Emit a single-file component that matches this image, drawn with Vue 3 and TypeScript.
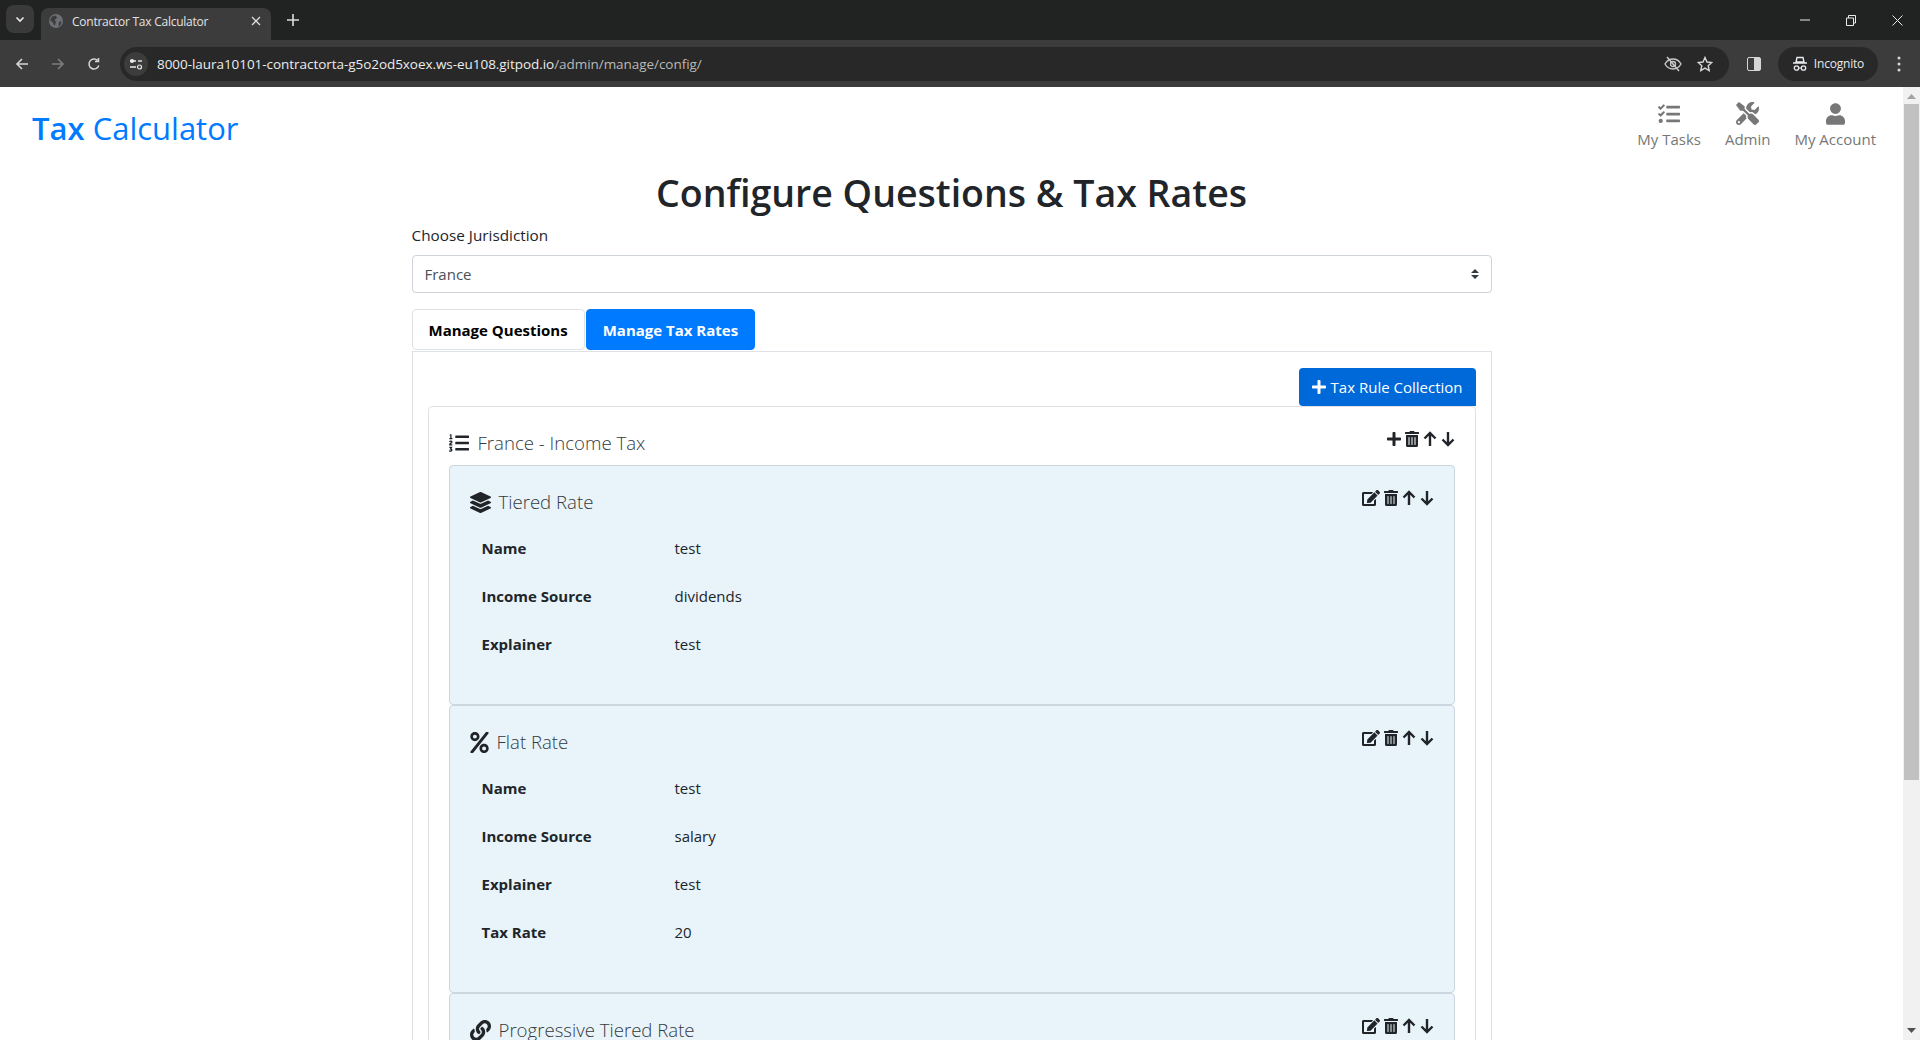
<script setup lang="ts">
const icons: Record<string, { box: string; d: string }> = {
  plus: { box: "0 0 448 512", d: "M416 208H272V64c0-17.67-14.33-32-32-32h-32c-17.67 0-32 14.33-32 32v144H32c-17.67 0-32 14.33-32 32v32c0 17.67 14.33 32 32 32h144v144c0 17.67 14.33 32 32 32h32c17.67 0 32-14.33 32-32V304h144c17.67 0 32-14.33 32-32v-32c0-17.67-14.33-32-32-32z" },
  trash: { box: "0 0 448 512", d: "M32 464a48 48 0 0 0 48 48h288a48 48 0 0 0 48-48V128H32zm272-256a16 16 0 0 1 32 0v224a16 16 0 0 1-32 0zm-96 0a16 16 0 0 1 32 0v224a16 16 0 0 1-32 0zm-96 0a16 16 0 0 1 32 0v224a16 16 0 0 1-32 0zM432 32H312l-9.4-18.7A24 24 0 0 0 281.1 0H166.8a23.72 23.72 0 0 0-21.4 13.3L136 32H16A16 16 0 0 0 0 48v32a16 16 0 0 0 16 16h416a16 16 0 0 0 16-16V48a16 16 0 0 0-16-16z" },
  edit: { box: "0 0 576 512", d: "M402.6 83.2l90.2 90.2c3.8 3.8 3.8 10 0 13.8L274.4 405.6l-92.8 10.3c-12.4 1.4-22.9-9.1-21.5-21.5l10.3-92.8L388.8 83.2c3.8-3.8 10-3.8 13.8 0zm162-22.9l-48.8-48.8c-15.2-15.2-39.9-15.2-55.2 0l-35.4 35.4c-3.8 3.8-3.8 10 0 13.8l90.2 90.2c3.8 3.8 10 3.8 13.8 0l35.4-35.4c15.2-15.3 15.2-40 0-55.2zM384 346.2V448H64V128h229.8c3.2 0 6.2-1.3 8.5-3.5l40-40c7.6-7.6 2.2-20.5-8.5-20.5H48C21.5 64 0 85.5 0 112v352c0 26.5 21.5 48 48 48h352c26.5 0 48-21.5 48-48V306.2c0-10.7-12.9-16-20.5-8.5l-40 40c-2.2 2.3-3.5 5.3-3.5 8.5z" },
  layers: { box: "0 0 512 512", d: "M12.41 148.02l232.94 105.67c6.8 3.09 14.49 3.09 21.29 0l232.94-105.67c16.55-7.51 16.55-32.52 0-40.03L266.65 2.31a25.607 25.607 0 0 0-21.29 0L12.41 107.98c-16.55 7.51-16.55 32.53 0 40.04zm487.18 88.28l-58.09-26.33-161.64 73.27c-7.56 3.43-15.59 5.17-23.86 5.17s-16.29-1.74-23.86-5.17L70.51 209.97l-58.1 26.33c-16.55 7.5-16.55 32.5 0 40l232.94 105.59c6.8 3.08 14.49 3.08 21.29 0L499.59 276.3c16.55-7.5 16.55-32.5 0-40zm0 127.8l-57.87-26.23-161.86 73.37c-7.56 3.43-15.59 5.17-23.86 5.17s-16.29-1.74-23.86-5.17L70.29 337.87 12.41 364.1c-16.55 7.5-16.55 32.5 0 40l232.94 105.59c6.8 3.08 14.49 3.08 21.29 0L499.59 404.1c16.55-7.5 16.55-32.5 0-40z" },
  listOl: { box: "0 0 512 512", d: "M61.77 401l17.5-20.15a19.92 19.92 0 0 0 5.07-14.19v-3.31C84.34 356 80.5 352 73 352H16a8 8 0 0 0-8 8v16a8 8 0 0 0 8 8h22.83a157.41 157.41 0 0 0-11 12.31l-5.61 7c-4 5.07-5.25 10.13-2.8 14.88l1.05 1.93c3 5.76 6.29 7.88 12.25 7.88h4.73c10.33 0 15.94 2.44 15.94 9.09 0 4.72-4.2 8.22-14.36 8.22a41.54 41.54 0 0 1-15.47-3.12c-6.49-3.88-11.74-3.5-15.6 3.12l-5.59 9.31c-3.72 6.13-3.19 11.72 2.63 15.94 7.71 4.69 20.38 9.44 37 9.44 34.16 0 48.5-22.75 48.5-44.12-.03-14.38-9.12-29.76-28.73-34.88zM496 224H176a16 16 0 0 0-16 16v32a16 16 0 0 0 16 16h320a16 16 0 0 0 16-16v-32a16 16 0 0 0-16-16zm0-160H176a16 16 0 0 0-16 16v32a16 16 0 0 0 16 16h320a16 16 0 0 0 16-16V80a16 16 0 0 0-16-16zm0 320H176a16 16 0 0 0-16 16v32a16 16 0 0 0 16 16h320a16 16 0 0 0 16-16v-32a16 16 0 0 0-16-16zM16 160h64a8 8 0 0 0 8-8v-16a8 8 0 0 0-8-8H64V40a8 8 0 0 0-8-8H32a8 8 0 0 0-7.14 4.42l-8 16A8 8 0 0 0 24 64h8v64H16a8 8 0 0 0-8 8v16a8 8 0 0 0 8 8zm-3.91 160H80a8 8 0 0 0 8-8v-16a8 8 0 0 0-8-8H41.32c3.29-10.29 48.34-18.68 48.34-56.44 0-29.06-25-39.56-44.47-39.56-21.36 0-33.8 10-40.46 18.75-4.37 5.59-3 10.84 2.8 15.37l8.58 6.88c5.61 4.56 11 2.47 16.12-2.44a13.44 13.44 0 0 1 9.46-3.84c3.33 0 9.28 1.56 9.28 8.75C51 248.19 0 257.31 0 304.59v4C0 316 5.08 320 12.09 320z" },
  link: { box: "0 0 512 512", d: "M326.612 185.391c59.747 59.809 58.927 155.698.36 214.59-.11.12-.24.25-.36.37l-67.2 67.2c-59.27 59.27-155.699 59.262-214.96 0-59.27-59.26-59.27-155.7 0-214.96l37.106-37.106c9.84-9.84 26.786-3.3 27.294 10.606.648 17.722 3.826 35.527 9.69 52.721 1.986 5.822.567 12.262-3.783 16.612l-13.087 13.087c-28.026 28.026-28.905 73.66-1.155 101.96 28.024 28.579 74.086 28.749 102.325.51l67.2-67.19c28.191-28.191 28.073-73.757 0-101.83-3.701-3.694-7.429-6.564-10.341-8.569a16.037 16.037 0 0 1-6.947-12.606c-.396-10.567 3.348-21.456 11.698-29.806l21.054-21.055c5.521-5.521 14.182-6.199 20.584-1.731a152.482 152.482 0 0 1 20.522 17.197zM467.547 44.449c-59.261-59.262-155.69-59.27-214.96 0l-67.2 67.2c-.12.12-.25.25-.36.37-58.566 58.892-59.387 154.781.36 214.59a152.454 152.454 0 0 0 20.521 17.196c6.402 4.468 15.064 3.789 20.584-1.731l21.054-21.055c8.35-8.35 12.094-19.239 11.698-29.806a16.037 16.037 0 0 0-6.947-12.606c-2.912-2.005-6.64-4.875-10.341-8.569-28.073-28.073-28.191-73.639 0-101.83l67.2-67.19c28.239-28.239 74.3-28.069 102.325.51 27.75 28.3 26.872 73.934-1.155 101.96l-13.087 13.087c-4.35 4.35-5.769 10.79-3.783 16.612 5.864 17.194 9.042 34.999 9.69 52.721.509 13.906 17.454 20.446 27.294 10.606l37.106-37.106c59.271-59.259 59.271-155.699.001-214.959z" },
  percent: { box: "0 0 448 512", d: "M112 224c61.9 0 112-50.1 112-112S173.9 0 112 0 0 50.1 0 112s50.1 112 112 112zm0-160c26.5 0 48 21.5 48 48s-21.5 48-48 48-48-21.5-48-48 21.5-48 48-48zm224 224c-61.9 0-112 50.1-112 112s50.1 112 112 112 112-50.1 112-112-50.1-112-112-112zm0 160c-26.5 0-48-21.5-48-48s21.5-48 48-48 48 21.5 48 48-21.5 48-48 48zM392.3.2l31.6.1c19.4.1 30.9 21.8 19.7 37.8L77.4 501.6a23.95 23.95 0 0 1-19.6 10.2l-33.4-.1c-19.5 0-30.9-21.9-19.7-37.8l368-463.7C377.2 4 384.5.2 392.3.2z" },
  user: { box: "0 0 448 512", d: "M224 256c70.7 0 128-57.3 128-128S294.7 0 224 0 96 57.3 96 128s57.3 128 128 128zm89.6 32h-16.7c-22.2 10.2-46.9 16-72.9 16s-50.6-5.8-72.9-16h-16.7C60.2 288 0 348.2 0 422.4V464c0 26.5 21.5 48 48 48h352c26.5 0 48-21.5 48-48v-41.6c0-74.2-60.2-134.4-134.4-134.4z" },
  tasks: { box: "0 0 512 512", d: "M139.61 35.5a12 12 0 0 0-17 0L58.93 98.81l-22.7-22.12a12 12 0 0 0-17 0L3.53 92.41a12 12 0 0 0 0 17l47.59 47.4a12.78 12.78 0 0 0 17.61 0l15.59-15.62L156.52 69a12.09 12.09 0 0 0 .09-17zm0 159.19a12 12 0 0 0-17 0l-63.68 63.72-22.7-22.1a12 12 0 0 0-17 0L3.53 252a12 12 0 0 0 0 17L51 316.5a12.77 12.77 0 0 0 17.6 0l15.7-15.69 72.2-72.22a12 12 0 0 0 .09-16.9zM64 368c-26.49 0-48.59 21.5-48.59 48S37.53 464 64 464a48 48 0 0 0 0-96zm432 16H208a16 16 0 0 0-16 16v32a16 16 0 0 0 16 16h288a16 16 0 0 0 16-16v-32a16 16 0 0 0-16-16zm0-320H208a16 16 0 0 0-16 16v32a16 16 0 0 0 16 16h288a16 16 0 0 0 16-16V80a16 16 0 0 0-16-16zm0 160H208a16 16 0 0 0-16 16v32a16 16 0 0 0 16 16h288a16 16 0 0 0 16-16v-32a16 16 0 0 0-16-16z" },
  tools: { box: "0 0 512 512", d: "M501.1 395.7L384 278.6c-23.1-23.1-57.6-27.6-85.4-13.9L192 158.1V96L64 0 0 64l96 128h62.1l106.6 106.6c-13.6 27.8-9.2 62.3 13.9 85.4l117.1 117.1c14.6 14.6 38.2 14.6 52.7 0l52.7-52.7c14.5-14.6 14.5-38.2 0-52.7zM331.7 225c28.3 0 54.9 11 74.9 31l19.4 19.4c15.8-6.9 30.8-16.5 43.8-29.5 37.1-37.1 49.7-89.3 37.9-136.7-2.2-9-13.5-12.1-20.1-5.5l-74.4 74.4-67.9-11.3L334 98.9l74.4-74.4c6.6-6.6 3.4-17.9-5.7-20.2-47.4-11.7-99.6.9-136.6 37.9-28.5 28.5-41.9 66.1-41.2 103.6l82.1 82.1c8.1-1.9 16.5-2.9 24.7-2.9zm-103.9 82l-56.7-56.7L18.7 402.8c-25 25-25 65.5 0 90.5s65.5 25 90.5 0l123.6-123.6c-7.6-19.9-9.9-41.6-5-62.7zM64 472c-13.2 0-24-10.8-24-24 0-13.3 10.7-24 24-24s24 10.7 24 24c0 13.2-10.7 24-24 24z" },
};

type Rule = {
  title: string;
  icon: string;
  iconWidth: number;
  rows: [string, string][];
};

const navItems = [
  { label: "My Tasks", icon: "tasks", width: 22, height: 22 },
  { label: "Admin", icon: "tools", width: 23, height: 23 },
  { label: "My Account", icon: "user", width: 19, height: 22 },
];

const rules: Rule[] = [
  {
    title: "Tiered Rate",
    icon: "layers",
    iconWidth: 21,
    rows: [
      ["Name", "test"],
      ["Income Source", "dividends"],
      ["Explainer", "test"],
    ],
  },
  {
    title: "Flat Rate",
    icon: "percent",
    iconWidth: 19,
    rows: [
      ["Name", "test"],
      ["Income Source", "salary"],
      ["Explainer", "test"],
      ["Tax Rate", "20"],
    ],
  },
  {
    title: "Progressive Tiered Rate",
    icon: "link",
    iconWidth: 21,
    rows: [],
  },
];
</script>

<template>
  <div class="window">
    <div class="tabstrip">
      <div class="tab-search">
        <svg width="10" height="10" viewBox="0 0 10 10"><path d="M1.5 3.5 5 7l3.5-3.5" fill="none" stroke="#e8eaed" stroke-width="1.6" /></svg>
      </div>
      <div class="tab">
        <svg class="favicon" width="14" height="14" viewBox="0 0 14 14">
          <circle cx="7" cy="7" r="7" fill="#6c6f73" />
          <path d="M3 2.5 7 1.5 8 4 5.5 6 7 8 5.5 12 3.5 8 1 6.5Z M10 8l2.5-1-1 4-2 1.5Z" fill="#3c3c3c" />
        </svg>
        <span class="tab-title">Contractor Tax Calculator</span>
        <svg class="tab-close" width="10" height="10" viewBox="0 0 10 10"><path d="M1 1l8 8M9 1l-8 8" stroke="#dcdcdc" stroke-width="1.3" /></svg>
      </div>
      <svg class="new-tab" width="12" height="12" viewBox="0 0 12 12"><path d="M6 0v12M0 6h12" stroke="#dcdcdc" stroke-width="1.6" /></svg>
      <div class="window-controls">
        <svg width="10" height="10" viewBox="0 0 10 10"><path d="M0 5h10" stroke="#e8eaed" stroke-width="1" /></svg>
        <svg width="10" height="11" viewBox="0 0 10 11"><path d="M.5 3h7v7.500h-7zM2.500 3V.5h7v7.500H7.500" fill="none" stroke="#e8eaed" stroke-width="1" /></svg>
        <svg width="11" height="11" viewBox="0 0 11 11"><path d="M.5.5l10 10M10.500.5l-10 10" stroke="#e8eaed" stroke-width="1" /></svg>
      </div>
    </div>

    <div class="toolbar">
      <svg class="nav-btn" width="14" height="14" viewBox="0 0 14 14"><path d="M13 7H2M7 2 2 7l5 5" fill="none" stroke="#d6d6d6" stroke-width="1.600" /></svg>
      <svg class="nav-btn" width="14" height="14" viewBox="0 0 14 14"><path d="M1 7h11M7 2l5 5-5 5" fill="none" stroke="#7d7d7d" stroke-width="1.600" /></svg>
      <svg class="nav-btn" width="14" height="14" viewBox="0 0 14 14"><path d="M11.800 8.500A5 5 0 1 1 10.500 3.400M11.500 1v3.500H8" fill="none" stroke="#d6d6d6" stroke-width="1.500" /></svg>
      <div class="omnibox">
        <div class="site-info">
          <svg width="14" height="12" viewBox="0 0 14 12"><path d="M1 3h6M1 9h6" stroke="#e8eaed" stroke-width="1.400" /><circle cx="3" cy="3" r="2" fill="#e8eaed" /><circle cx="10.500" cy="9" r="2" fill="none" stroke="#e8eaed" stroke-width="1.200" /><path d="M9 3h4" stroke="#e8eaed" stroke-width="1.400" /></svg>
        </div>
        <span class="url"><span class="url-host">8000-laura10101-contractorta-g5o2od5xoex.ws-eu108.gitpod.io</span>/admin/manage/config/</span>
        <svg class="omni-icon" width="18" height="16" viewBox="0 0 18 16"><path d="M1 8c2-3.500 5-5 8-5s6 1.500 8 5c-2 3.500-5 5-8 5s-6-1.500-8-5Z" fill="none" stroke="#c8c8c8" stroke-width="1.400" /><circle cx="9" cy="8" r="2.500" fill="none" stroke="#c8c8c8" stroke-width="1.300" /><path d="M3 1l12 14" stroke="#c8c8c8" stroke-width="1.500" /></svg>
        <svg class="omni-star" width="16" height="16" viewBox="0 0 16 16"><path d="M8 1.500l2 4.500 4.800.5-3.600 3.200 1 4.800L8 12.100l-4.200 2.400 1-4.800L1.200 6.500 6 6Z" fill="none" stroke="#d6d6d6" stroke-width="1.400" /></svg>
      </div>
      <svg class="side-panel" width="14" height="14" viewBox="0 0 14 14"><rect x=".5" y=".5" width="13" height="13" rx="1.500" fill="none" stroke="#d6d6d6" /><rect x="7" y="1" width="6" height="12" fill="#d6d6d6" /></svg>
      <div class="incognito">
        <svg width="16" height="16" viewBox="0 0 16 16"><path d="M5 1.500h6l1 4.500H4ZM1 7h14" fill="none" stroke="#e8eaed" stroke-width="1.400" /><circle cx="4.500" cy="12" r="2.200" fill="none" stroke="#e8eaed" stroke-width="1.300" /><circle cx="11.500" cy="12" r="2.200" fill="none" stroke="#e8eaed" stroke-width="1.300" /><path d="M6.700 12h2.600" stroke="#e8eaed" /></svg>
        <span>Incognito</span>
      </div>
      <svg class="menu-dots" width="4" height="16" viewBox="0 0 4 16"><circle cx="2" cy="2" r="1.500" fill="#d6d6d6" /><circle cx="2" cy="8" r="1.500" fill="#d6d6d6" /><circle cx="2" cy="14" r="1.500" fill="#d6d6d6" /></svg>
    </div>

    <div class="viewport">
      <div class="page">
        <nav class="navbar">
          <a class="brand"><strong>Tax</strong> Calculator</a>
          <ul class="nav-list">
            <li v-for="item in navItems" :key="item.label" class="nav-item">
              <span class="nav-icon">
                <svg :width="item.width" :height="item.height" :viewBox="icons[item.icon].box" fill="#777">
                  <path :d="icons[item.icon].d" />
                </svg>
              </span>
              <span>{{ item.label }}</span>
            </li>
          </ul>
        </nav>

        <main class="container">
          <h1>Configure Questions &amp; Tax Rates</h1>
          <label class="field-label" for="jurisdiction">Choose Jurisdiction</label>
          <div class="select-wrap">
            <select id="jurisdiction" class="select">
              <option>France</option>
            </select>
            <svg class="select-arrows" width="8" height="10" viewBox="0 0 8 10"><path d="M4 0 8 4H0ZM4 10 0 6h8Z" fill="#343a40" /></svg>
          </div>

          <div class="tabs">
            <button class="tab-btn">Manage Questions</button>
            <button class="tab-btn active">Manage Tax Rates</button>
          </div>

          <section class="tab-content">
            <div class="add-row">
              <button class="btn-add">
                <svg width="14" height="16" :viewBox="icons.plus.box" fill="#fff"><path :d="icons.plus.d" /></svg>
                Tax Rule Collection
              </button>
            </div>

            <div class="collection">
              <div class="block-head">
                <h5 class="block-title">
                  <svg width="20" height="20" :viewBox="icons.listOl.box" fill="#212529"><path :d="icons.listOl.d" /></svg>
                  France - Income Tax
                </h5>
                <div class="actions">
                  <svg width="14" height="16" :viewBox="icons.plus.box"><path :d="icons.plus.d" /></svg>
                  <svg width="14" height="16" :viewBox="icons.trash.box"><path :d="icons.trash.d" /></svg>
                  <svg class="arrow" width="14" height="16" viewBox="0 0 14 16"><path d="M7 15V2M1.500 7.500 7 2l5.500 5.500" /></svg>
                  <svg class="arrow" width="14" height="16" viewBox="0 0 14 16"><path d="M7 1v13M1.500 8.500 7 14l5.500-5.500" /></svg>
                </div>
              </div>

              <div v-for="rule in rules" :key="rule.title" class="rule">
                <div class="block-head">
                  <h5 class="block-title">
                    <svg :width="rule.iconWidth" height="21" :viewBox="icons[rule.icon].box" fill="#212529"><path :d="icons[rule.icon].d" /></svg>
                    {{ rule.title }}
                  </h5>
                  <div class="actions">
                    <svg width="18" height="16" :viewBox="icons.edit.box"><path :d="icons.edit.d" /></svg>
                    <svg width="14" height="16" :viewBox="icons.trash.box"><path :d="icons.trash.d" /></svg>
                    <svg class="arrow" width="14" height="16" viewBox="0 0 14 16"><path d="M7 15V2M1.500 7.500 7 2l5.500 5.500" /></svg>
                    <svg class="arrow" width="14" height="16" viewBox="0 0 14 16"><path d="M7 1v13M1.500 8.500 7 14l5.500-5.500" /></svg>
                  </div>
                </div>
                <dl class="rows">
                  <div v-for="row in rule.rows" :key="row[0]" class="row">
                    <dt>{{ row[0] }}</dt>
                    <dd>{{ row[1] }}</dd>
                  </div>
                </dl>
              </div>
            </div>
          </section>
        </main>
      </div>

      <div class="scrollbar">
        <svg width="9" height="5" viewBox="0 0 9 5"><path d="M4.500 0 9 5H0Z" fill="#a3a3a3" /></svg>
        <div class="thumb"></div>
        <svg class="arrow-down" width="9" height="5" viewBox="0 0 9 5"><path d="M4.500 5 0 0h9Z" fill="#505050" /></svg>
      </div>
    </div>
  </div>
</template>

<style>
html,
body {
  margin: 0;
  overflow: hidden;
}
</style>

<style scoped>
.window {
  width: 1920px;
  height: 1040px;
  display: flex;
  flex-direction: column;
  overflow: hidden;
  font-family: "Open Sans", "Liberation Sans", sans-serif;
  font-size: 15px;
  color: #212529;
  background: #fff;
}

/* browser chrome */
.tabstrip {
  height: 40px;
  flex: none;
  background: #212322;
  display: flex;
  align-items: flex-end;
}
.tab-search {
  width: 28px;
  height: 28px;
  margin: 0 7px 7px 6px;
  border-radius: 8px;
  background: #3a3a3a;
  display: flex;
  align-items: center;
  justify-content: center;
}
.tab {
  width: 230px;
  height: 32px;
  background: #3c3c3c;
  border-radius: 8px 8px 0 0;
  display: flex;
  align-items: center;
  box-sizing: border-box;
  padding: 0 10px 6px 8px;
  color: #e3e3e3;
  font-size: 12px;
  letter-spacing: -0.25px;
}
.tab-title {
  margin-left: 9px;
  flex: 1;
}
.new-tab {
  margin: 0 0 14px 16px;
}
.window-controls {
  margin-left: auto;
  width: 103px;
  height: 40px;
  display: flex;
  align-items: center;
  justify-content: space-between;
  padding-right: 17px;
}
.toolbar {
  height: 47px;
  flex: none;
  background: #3c3c3c;
  display: flex;
  align-items: center;
  box-sizing: border-box;
  padding-left: 15px;
}
.nav-btn {
  margin-right: 22px;
}
.nav-btn:nth-child(3) {
  margin-right: 19px;
}
.omnibox {
  width: 1609px;
  height: 34px;
  border-radius: 17px;
  background: #282828;
  display: flex;
  align-items: center;
  box-sizing: border-box;
  padding: 0 16px 0 4px;
}
.site-info {
  width: 24px;
  height: 24px;
  border-radius: 50%;
  background: #3c3c3c;
  display: flex;
  align-items: center;
  justify-content: center;
}
.url {
  margin-left: 9px;
  flex: 1;
  color: #b9b9b9;
  font-size: 13.500px;
  letter-spacing: -0.05px;
}
.url-host {
  color: #ececec;
}
.omni-star {
  margin-left: 15px;
}
.side-panel {
  margin-left: 18px;
}
.incognito {
  margin-left: 17px;
  width: 100px;
  height: 34px;
  border-radius: 17px;
  background: #282828;
  display: flex;
  align-items: center;
  justify-content: center;
  gap: 6px;
  color: #e8eaed;
  font-size: 12px;
  letter-spacing: -0.2px;
}
.menu-dots {
  margin-left: 19px;
}

/* page */
.viewport {
  flex: 1;
  min-height: 0;
  display: flex;
}
.page {
  flex: 1;
  min-width: 0;
  overflow: hidden;
}
.scrollbar {
  width: 17px;
  flex: none;
  background: #f1f1f1;
  display: flex;
  flex-direction: column;
  align-items: center;
  padding-top: 7px;
  box-sizing: border-box;
}
.thumb {
  width: 15px;
  height: 676px;
  margin-top: 5px;
  background: #c1c1c1;
}
.arrow-down {
  margin-top: auto;
  margin-bottom: 7px;
}
.navbar {
  height: 76px;
  display: flex;
  justify-content: space-between;
  box-sizing: border-box;
  padding: 0 27px 0 32px;
}
.brand {
  color: #007bff;
  font-size: 31px;
  line-height: 40px;
  margin-top: 21px;
}
.brand strong {
  font-weight: 600;
}
.nav-list {
  list-style: none;
  display: flex;
  gap: 24px;
  margin: 0;
  padding: 15px 0 0;
}
.nav-item {
  display: flex;
  flex-direction: column;
  align-items: center;
  gap: 2px;
  color: #777;
  line-height: 24px;
}
.nav-icon {
  height: 23px;
  display: flex;
  align-items: center;
}
.container {
  width: 1080px;
  margin: 0 auto;
}
h1 {
  margin: 0;
  height: 60px;
  font-size: 37.500px;
  line-height: 60px;
  font-weight: 600;
  text-align: center;
}
.field-label {
  display: block;
  height: 32px;
  line-height: 24px;
  font-size: 15.300px;
}
.select-wrap {
  position: relative;
}
.select {
  display: block;
  width: 100%;
  height: 38px;
  padding: 0 12px;
  appearance: none;
  border: 1px solid #ced4da;
  border-radius: 4px;
  background: #fff;
  color: #495057;
  font: inherit;
}
.select-arrows {
  position: absolute;
  right: 13px;
  top: 14px;
}
.tabs {
  display: flex;
  gap: 1px;
  margin-top: 16px;
}
.tab-btn {
  height: 41px;
  padding: 0 16px;
  border: 1px solid #dee2e6;
  border-radius: 4px;
  background: #fff;
  color: #000;
  font: inherit;
  font-weight: 700;
}
.tab-btn.active {
  background: #007bff;
  border-color: #007bff;
  color: #fff;
}
.tab-content {
  margin-top: 1px;
  border: 1px solid #dee2e6;
  border-bottom: 0;
  padding: 16px 15px 0;
}
.add-row {
  display: flex;
  justify-content: flex-end;
}
.btn-add {
  height: 38px;
  padding: 0 13px;
  border: 0;
  border-radius: 4px 4px 0 4px;
  background: #0069d9;
  color: #fff;
  font: inherit;
  display: flex;
  align-items: center;
  gap: 5px;
}
.collection {
  border: 1px solid #dee2e6;
  border-radius: 4px;
  padding: 20px;
}
.block-head {
  height: 32px;
  display: flex;
  justify-content: space-between;
  align-items: center;
  margin-bottom: 6px;
}
.block-title {
  margin: 0;
  display: flex;
  align-items: center;
  gap: 9px;
  font-size: 18.600px;
  font-weight: 300;
  line-height: 32px;
  color: #343a40;
}
.rule .block-title {
  gap: 8px;
}
.actions {
  display: flex;
  align-items: center;
  gap: 4px;
  padding-bottom: 8px;
  fill: #212529;
}
.arrow {
  fill: none;
  stroke: #212529;
  stroke-width: 2.400;
}
.rule {
  background: #e8f4fa;
  border: 1px solid #cbd6de;
  border-radius: 4px;
  padding: 20px 20px 36px;
}
.rows {
  margin: 0;
}
.row {
  display: grid;
  grid-template-columns: 192px 1fr;
  height: 48px;
  padding-left: 12px;
  align-items: center;
}
.row dt {
  font-weight: 700;
}
.row dd {
  margin: 0;
  padding-left: 1px;
}
</style>
